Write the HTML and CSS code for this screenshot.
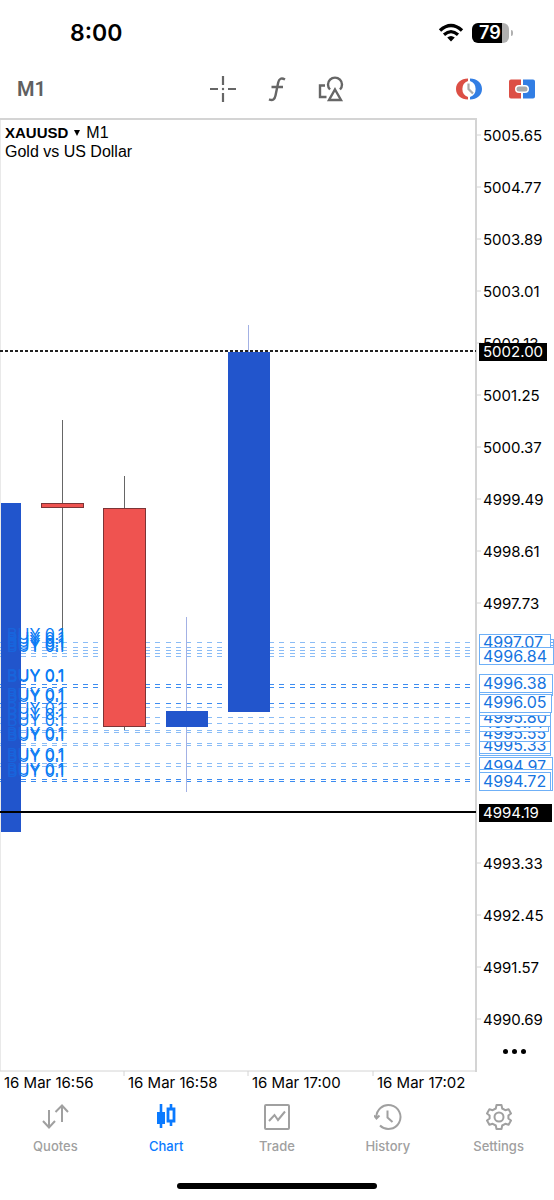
FILE: index.html
```html
<!DOCTYPE html>
<html lang="en">
<head>
<meta charset="utf-8">
<meta name="viewport" content="width=device-width, initial-scale=1">
<title>XAUUSD M1</title>
<link rel="stylesheet" href="styles.css">
</head>
<body>
<div class="app">
  <header class="status">
    <time class="clock">8:00</time>
    <div class="status-icons">
      <svg class="wifi" viewBox="0 0 26 20" role="img" aria-label="Wi-Fi">
        <path d="M2 7.5Q13-2.500 24 7.500" fill="none" stroke="#000" stroke-width="3.400"/>
        <path d="M6 11.800Q13 5.600 20 11.800" fill="none" stroke="#000" stroke-width="3.200"/>
        <path d="M9.200 14.600Q13 11.600 16.800 14.600L13 18.600Z" fill="#000"/>
      </svg>
      <div class="battery"><span class="battery-level">79</span></div>
    </div>
  </header>

  <div class="toolbar">
    <button class="timeframe" type="button">M1</button>
    <div class="tools">
      <button class="tool" type="button" aria-label="Crosshair">
        <svg viewBox="0 0 28 28"><path d="M14 1v9M14 18v9M1 14h8M19 14h8" stroke="#666" stroke-width="2.200"/><circle cx="14" cy="14" r="1.200" fill="#666"/></svg>
      </button>
      <button class="tool" type="button" aria-label="Indicators">
        <svg viewBox="0 0 28 28"><path d="M22 4.500C18.500 2.500 16 3.500 15.200 7.500L12.500 20.500C11.700 24.500 9.800 26 6 24.300M8.500 12H20" fill="none" stroke="#666" stroke-width="2.400"/></svg>
      </button>
      <button class="tool" type="button" aria-label="Objects">
        <svg viewBox="0 0 28 28" fill="none" stroke="#666" stroke-width="2.400"><path d="M13 14.500A7 7 0 1 1 23 14.500M8 10.500H3V22H9.500"/><path d="M18 14.500L24 25H12Z"/></svg>
      </button>
    </div>
    <div class="trade-tools">
      <button class="tool" type="button" aria-label="Trading session">
        <svg viewBox="0 0 28 28">
          <path d="M13 3.500C6 3.500 1 8 1 14S6 24.500 13 24.500L13 22A8.500 8.500 0 0 1 13 6Z" fill="#dc4f45"/>
          <path d="M15 3.500C22 3.500 27 8 27 14S22 24.500 15 24.500L15 22A8.500 8.500 0 0 0 15 6Z" fill="#327ee4"/>
          <path d="M13.500 8.500V14L18 18.500" fill="none" stroke="#aaa" stroke-width="2.200"/>
        </svg>
      </button>
      <button class="tool" type="button" aria-label="One click trading">
        <svg viewBox="0 0 28 28">
          <path d="M3 4.500H13V10H11A4 4 0 0 0 11 18H13V23.500H3A2 2 0 0 1 1 21.500V6.500A2 2 0 0 1 3 4.500Z" fill="#dc4f45"/>
          <path d="M15 4.500H25A2 2 0 0 1 27 6.500V21.500A2 2 0 0 1 25 23.500H15V18H17A4 4 0 0 0 17 10H15Z" fill="#327ee4"/>
          <rect x="8.500" y="11.500" width="11" height="5" rx="2.500" fill="#aaa"/>
        </svg>
      </button>
    </div>
  </div>

  <main class="chart">
    <button class="symbol" type="button">
      <span class="symbol-line"><b>XAUUSD</b><i class="caret"></i><span>M1</span></span>
      <span>Gold vs US Dollar</span>
    </button>
    <svg class="plot" viewBox="0 118 554 976" role="img" aria-label="Gold vs US Dollar price chart">
      <path class="frame" d="M0 119H476V1072"/>
      <path class="frame thin" d="M0 119V1071H476"/>
      <path class="frame thin" d="M476 135h5M476 187h5M476 239h5M476 291h5M476 343h5M476 395h5M476 447h5M476 499h5M476 551h5M476 603h5M476 863h5M476 915h5M476 967h5M476 1019h5M124 1071v5M248 1071v5M373 1071v5"/>

      <g class="level">
        <path d="M0 642H476M0 647H476M0 650H476M0 653H476M0 656H476M0 707H476M0 717H476M0 723H476M0 730H476M0 732H476M0 743H476M0 745H476M0 763H476M0 766H476"/>
        <path class="strong" d="M0 684H476M0 687H476M0 703H476M0 779H476M0 781H476"/>
      </g>

      <g>
        <path class="wick" d="M62 420V650M124 476V730"/>
        <path class="wick up" d="M186 617V792M248 325V352"/>
        <path class="bull" d="M1 503H21V832H1ZM166 711H208V727H166ZM228 352H270V712H228Z"/>
        <path class="bear" d="M41 503H83V507H41ZM103 508H145V726H103Z"/>
      </g>
      <path class="bid" d="M0 351H476"/>
      <path class="stop" d="M0 812H476"/>

      <g class="order">
        <text x="7" y="640">BUY 0.1</text><text x="7" y="644">BUY 0.1</text><text x="7" y="647">BUY 0.1</text><text x="7" y="650">BUY 0.1</text><text x="7" y="652">BUY 0.1</text>
        <text x="7" y="681">BUY 0.1</text><text x="7" y="682">BUY 0.1</text>
        <text x="7" y="700">BUY 0.1</text><text x="7" y="702">BUY 0.1</text>
        <text x="7" y="714">BUY 0.1</text><text x="7" y="720">BUY 0.1</text><text x="7" y="726">BUY 0.1</text>
        <text x="7" y="739">BUY 0.1</text><text x="7" y="741">BUY 0.1</text>
        <text x="7" y="760">BUY 0.1</text><text x="7" y="762">BUY 0.1</text>
        <text x="7" y="775">BUY 0.1</text><text x="7" y="777">BUY 0.1</text>
      </g>
      <path class="bull veil" d="M1 503H21V811H1Z"/>

      <g class="price">
        <text x="483" y="141">5005.65</text><text x="483" y="193">5004.77</text><text x="483" y="245">5003.89</text><text x="483" y="297">5003.01</text><text x="483" y="349">5002.13</text><text x="483" y="401">5001.25</text><text x="483" y="453">5000.37</text><text x="483" y="505">4999.49</text><text x="483" y="557">4998.61</text><text x="483" y="609">4997.73</text><text x="483" y="869">4993.33</text><text x="483" y="921">4992.45</text><text x="483" y="973">4991.57</text><text x="483" y="1025">4990.69</text>
      </g>

      <g class="tag">
        <path d="M479 639H553V655H479ZM479 642H553V658H479ZM479 645H553V661H479Z"/>
        <path d="M479 634H550V651H479Z"/><text x="483" y="648">4997.07</text>
        <path d="M479 647H553V664H479Z"/><text x="483" y="662">4996.84</text>
        <path d="M479 678H552V695H479Z"/>
        <path d="M479 674H552V692H479Z"/><text x="483" y="689">4996.38</text>
        <path d="M479 737H550V755H479Z"/>
        <path d="M479 735H550V753H479Z"/><text x="483" y="751">4995.33</text>
        <path d="M479 724H550V741H479Z"/><text x="483" y="739">4995.55</text>
        <path d="M479 714H548V731H479Z"/><text x="483" y="728">4995.71</text>
        <path d="M479 709H550V726H479Z"/><text x="483" y="723">4995.80</text>
        <path d="M479 699H550V715H479Z"/>
        <path d="M479 694H551V712H479Z"/><text x="483" y="708">4996.05</text>
        <path d="M479 757H552V775H479Z"/><text x="483" y="772">4994.97</text>
        <path d="M479 769H552V790H479Z"/>
        <path d="M479 772H550V790H479Z"/><text x="483" y="787">4994.72</text>
      </g>
      <g class="tag filled">
        <path d="M479 343H546V360H479Z"/><text x="483" y="357">5002.00</text>
        <path d="M479 804H551V821H479Z"/><text x="483" y="818">4994.19</text>
      </g>

      <g class="date">
        <text x="4" y="1088">16 Mar 16:56</text><text x="128" y="1088">16 Mar 16:58</text><text x="252" y="1088">16 Mar 17:00</text><text x="377" y="1088">16 Mar 17:02</text>
      </g>
    </svg>
    <button class="more" type="button" aria-label="More"><i></i><i></i><i></i></button>
  </main>

  <nav class="tabs">
    <a class="tab" href="#quotes">
      <svg viewBox="0 0 28 28"><path d="M8 7V24M2 18L8 24.500L14 18M21 19V3M14.500 9L21 2.500L27 9"/></svg>
      <span>Quotes</span>
    </a>
    <a class="tab active" href="#chart" aria-current="page">
      <svg viewBox="0 0 28 28"><path d="M9 1V25M19 1V5M19 19V23" stroke-width="2.600"/><path d="M6 10H12V20H6Z" fill="currentColor"/><path d="M16 6H22V18H16Z" stroke-width="2.800"/></svg>
      <span>Chart</span>
    </a>
    <a class="tab" href="#trade">
      <svg viewBox="0 0 28 28"><rect x="2" y="2" width="24" height="24" rx="1"/><path d="M6 18L11.500 12L15 17L22 8.500"/></svg>
      <span>Trade</span>
    </a>
    <a class="tab" href="#history">
      <svg viewBox="0 0 28 28"><path d="M2.500 15A12 12 0 1 1 6 22.500M0 12.500L2.500 15.500L5.500 12.500M13.500 7.500V14.500L18.500 19"/></svg>
      <span>History</span>
    </a>
    <a class="tab" href="#settings">
      <svg viewBox="0 0 28 28"><circle cx="14" cy="14" r="4.500"/><path d="M11.500 2H16.500L17.200 5.500L20.300 7.200L23.600 6.200L26 10.500L23.400 12.500V15.500L26 17.500L23.600 21.800L20.300 20.800L17.200 22.500L16.500 26H11.500L10.800 22.500L7.700 20.800L4.400 21.800L2 17.500L4.600 15.500V12.500L2 10.500L4.400 6.200L7.700 7.200L10.800 5.500Z" stroke-linejoin="round"/></svg>
      <span>Settings</span>
    </a>
  </nav>
  <div class="home-bar"></div>
</div>
</body>
</html>
```
FILE: styles.css
```css
* { box-sizing: border-box; }
body { margin: 0; background: #fff; color: #000; font-family: Inter, "Liberation Sans", sans-serif; }
button { padding: 0; border: 0; background: none; color: inherit; font: inherit; text-align: left; cursor: pointer; }
.app { display: flex; flex-direction: column; min-height: 100vh; }

.status { display: flex; align-items: center; justify-content: space-between; height: 66px; padding: 0 45px 0 70px; }
.clock { font-size: 23px; font-weight: 600; }
.status-icons { display: flex; align-items: center; gap: 8px; }
.wifi { width: 26px; height: 20px; }
.battery { position: relative; width: 37px; height: 20px; border-radius: 6px; background: linear-gradient(90deg, #000 80%, #b0b0b0 80%); }
.battery::after { content: ""; position: absolute; right: -4px; top: 7px; width: 2px; height: 6px; border-radius: 0 2px 2px 0; background: #b0b0b0; }
.battery-level { display: block; padding-left: 7px; color: #fff; font-size: 18px; font-weight: 600; line-height: 20px; }

.toolbar { display: grid; grid-template-columns: 1fr auto 1fr; align-items: center; height: 52px; padding: 0 18px 6px 17px; }
.timeframe { justify-self: start; color: #606060; font-family: Roboto, sans-serif; font-size: 20px; font-weight: 600; }
.tools { display: flex; gap: 26px; }
.trade-tools { display: flex; gap: 25px; justify-self: end; }
.tool { width: 28px; height: 28px; }
.tool svg { display: block; width: 100%; height: 100%; }

.chart { position: relative; }
.plot { display: block; width: 100%; height: auto; }
.symbol { position: absolute; left: 5px; top: 5px; display: grid; font-family: "Liberation Sans", sans-serif; font-size: 16px; line-height: 19px; }
.symbol-line { display: flex; align-items: center; gap: 6px; }
.symbol-line b { font-size: 15px; }
.caret { border: 3px solid transparent; border-top: 6px solid #000; border-bottom: 0; }
.more { position: absolute; right: 28px; bottom: 34px; display: flex; gap: 4px; padding: 6px 0; }
.more i { width: 5px; height: 5px; border-radius: 50%; background: #000; }

.frame { fill: none; stroke: #d4d4d4; stroke-width: 2; }
.frame.thin { stroke-width: 1; }
.level { fill: none; stroke: #8abcf6; stroke-width: 1; stroke-dasharray: 5 6 5 5 5 5; shape-rendering: crispEdges; }
.level .strong { stroke: #3d8cf0; }
.wick { fill: none; stroke: #666; shape-rendering: crispEdges; }
.wick.up { stroke: #a3b1e4; }
.bull { fill: #2255cc; }
.bull.veil { opacity: 0.6; }
.bear { fill: #ef5350; stroke: #7d3436; shape-rendering: crispEdges; }
.bid { stroke: #222; stroke-width: 2; stroke-dasharray: 3 2; }
.stop { stroke: #000; stroke-width: 2; }
.order { fill: #0a7cf5; font-size: 16px; }
.price { font-size: 15px; }
.date { font-size: 15px; }
.tag { fill: #1674e0; font-size: 16px; }
.tag path { fill: #fff; stroke: #6fb0f7; shape-rendering: crispEdges; }
.tag.filled { fill: #fff; font-size: 15px; }
.tag.filled path { fill: #000; stroke: #000; }

.tabs { display: grid; grid-template-columns: repeat(5, 1fr); padding-top: 9px; }
.tab { display: flex; flex-direction: column; align-items: center; gap: 6px; color: #a0a0a0; font-size: 13px; font-weight: 500; line-height: 18px; text-decoration: none; }
.tab svg { width: 28px; height: 28px; fill: none; stroke: currentColor; stroke-width: 2; }
.tab.active { color: #0a7aff; }
.home-bar { width: 36%; height: 6px; margin: 28px auto 11px; border-radius: 3px; background: #000; }
```
